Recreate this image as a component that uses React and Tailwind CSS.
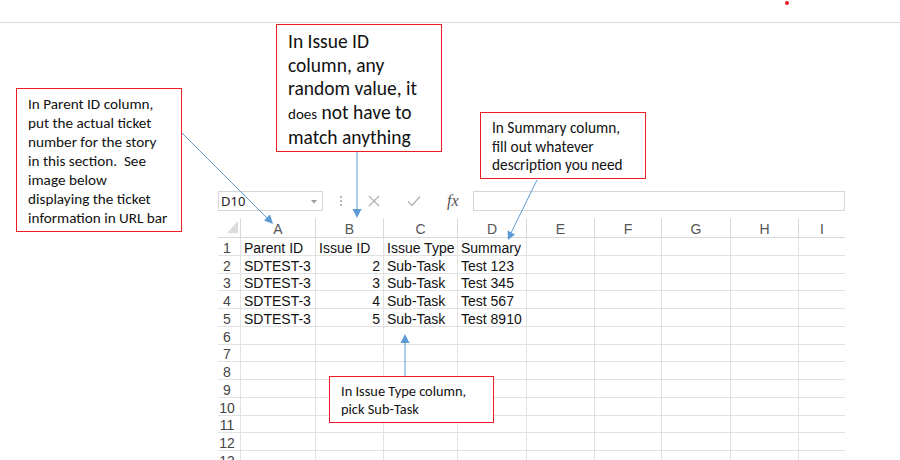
import React from 'react';

const cols = ['A', 'B', 'C', 'D', 'E', 'F', 'G', 'H', 'I'];

const rows = [
  ['Parent ID', 'Issue ID', 'Issue Type', 'Summary'],
  ['SDTEST-3', 2, 'Sub-Task', 'Test 123'],
  ['SDTEST-3', 3, 'Sub-Task', 'Test 345'],
  ['SDTEST-3', 4, 'Sub-Task', 'Test 567'],
  ['SDTEST-3', 5, 'Sub-Task', 'Test 8910'],
];

const callout = 'absolute border-[1.5px] border-[#ec1c24] bg-white text-[#111] [font-family:Calibri,Carlito,Lato,sans-serif]';

function Cell({ value, last }) {
  const isNum = typeof value === 'number';
  return (
    <div
      className={`flex h-[17.75px] items-center overflow-visible whitespace-nowrap border-b border-[#e2e2e2] pt-[3px] text-[14px] leading-none text-[#111] ${
        last ? '' : 'border-r'
      } ${isNum ? 'justify-end pr-[3px]' : 'pl-[3px]'}`}
    >
      {value ?? ''}
    </div>
  );
}

function FormulaBar() {
  return (
    <div className="flex h-[20px] w-[627px] items-stretch">
      <div className="flex w-[105px] items-center justify-between border border-[#d6d6d6] pl-[2px] pr-[5px] pt-[1px] text-[13px] text-[#222]">
        <span>D10</span>
        <svg width="6" height="4" viewBox="0 0 6 4">
          <path d="M0 0h6L3 3.5z" fill="#9a9a9a" />
        </svg>
      </div>
      <div className="flex w-[150px] items-center">
        <div className="ml-[16px] flex w-[3px] flex-col items-center gap-[2px]">
          <span className="h-[2px] w-[2px] bg-[#b8b8b8]" />
          <span className="h-[2px] w-[2px] bg-[#b8b8b8]" />
          <span className="h-[2px] w-[2px] bg-[#b8b8b8]" />
        </div>
        <svg className="ml-[26px]" width="12" height="12" viewBox="0 0 12 12">
          <path d="M1 1l10 10M11 1L1 11" stroke="#b4b4b4" strokeWidth="1.4" />
        </svg>
        <svg className="ml-[27px]" width="14" height="12" viewBox="0 0 14 12">
          <path d="M1 6.5l4 4L13 1.5" fill="none" stroke="#b4b4b4" strokeWidth="1.4" />
        </svg>
        <span className="ml-[26px] text-[16px] italic leading-none text-[#555] [font-family:'Liberation_Serif',serif]">
          fx
        </span>
      </div>
      <div className="w-[372px] border border-[#d6d6d6]" />
    </div>
  );
}

function Sheet() {
  const total = 13;
  return (
    <div className="mt-[7px] grid w-[627px] grid-cols-[23px_75px_68px_74px_69px_68px_67px_69px_68px_46px] [font-family:'Liberation_Sans',Arial,sans-serif]">
      {/* corner */}
      <div className="flex h-[20px] items-end justify-end border-b border-r border-[#d8d8d8] pb-[4px] pr-[2px]">
        <svg width="11" height="12" viewBox="0 0 11 12">
          <path d="M11 0v12H0z" fill="#dcdcdc" />
        </svg>
      </div>
      {cols.map((c, i) => (
        <div
          key={c}
          className={`flex h-[20px] items-center justify-center border-b border-[#d8d8d8] pt-[3px] text-[14px] leading-none text-[#555] ${
            i === cols.length - 1 ? '' : 'border-r'
          }`}
        >
          {c}
        </div>
      ))}

      {Array.from({ length: total }).map((_, r) => (
        <React.Fragment key={r}>
          <div className="flex h-[17.75px] items-center justify-center border-b border-r border-[#e2e2e2] pr-[4px] pt-[3px] text-[14px] leading-none text-[#444]">
            {r + 1}
          </div>
          {cols.map((c, i) => (
            <Cell key={c} value={rows[r] ? rows[r][i] : undefined} last={i === cols.length - 1} />
          ))}
        </React.Fragment>
      ))}
    </div>
  );
}

function Arrows() {
  const blue = '#5b9bd5';
  return (
    <svg className="pointer-events-none absolute left-0 top-0" width="900" height="460">
      {/* Parent ID -> column A */}
      <line x1="182" y1="133" x2="267" y2="218" stroke={blue} strokeWidth="1" />
      <polygon points="273,224 264,220.5 270,214.5" fill={blue} />
      {/* Issue ID -> column B */}
      <line x1="357" y1="152" x2="357" y2="210" stroke={blue} strokeWidth="1" />
      <polygon points="357,218 352.5,209 361.5,209" fill={blue} />
      {/* Summary -> column D */}
      <line x1="537" y1="180" x2="511" y2="233" stroke={blue} strokeWidth="1" />
      <polygon points="508,240 507.5,230.5 515,234.5" fill={blue} />
      {/* Issue Type -> column C */}
      <line x1="405" y1="376" x2="405" y2="342" stroke={blue} strokeWidth="1" />
      <polygon points="405,334 400.5,343 409.5,343" fill={blue} />
    </svg>
  );
}

export default function App() {
  return (
    <div className="relative h-[460px] w-[900px] overflow-hidden bg-white">
      <div className="h-[23px] border-b border-[#d9d9d9] pl-[785px] pt-[1px]">
        <div className="h-[4px] w-[4px] rounded-full bg-[#e81123]" />
      </div>

      <div className="pl-[218px] pt-[168px]">
        <FormulaBar />
        <Sheet />
      </div>

      <div className={`${callout} left-[16px] top-[88px] h-[144px] w-[166px] pl-[11px] pt-[6px] text-[15.2px] leading-[19px]`}>
        In Parent ID column,
        <br />
        put the actual ticket
        <br />
        number for the story
        <br />
        <span className="whitespace-pre">in this section.  See</span>
        <br />
        image below
        <br />
        displaying the ticket
        <br />
        information in URL bar
      </div>

      <div className={`${callout} left-[276px] top-[24px] h-[128px] w-[166px] pl-[11px] pt-[5px] text-[19.5px] leading-[23.5px]`}>
        In Issue ID
        <br />
        column, any
        <br />
        random value, it
        <br />
        <span className="text-[15px]">does</span> not have to
        <br />
        match anything
      </div>

      <div className={`${callout} left-[480px] top-[112px] h-[67px] w-[166px] pl-[11px] pt-[6px] text-[15.3px] leading-[18.7px]`}>
        In Summary column,
        <br />
        fill out whatever
        <br />
        description you need
      </div>

      <div className={`${callout} left-[329px] top-[376px] h-[47px] w-[165px] pl-[11px] pt-[5px] text-[14.4px] leading-[18px]`}>
        In Issue Type column,
        <br />
        pick Sub-Task
      </div>

      <Arrows />
    </div>
  );
}
